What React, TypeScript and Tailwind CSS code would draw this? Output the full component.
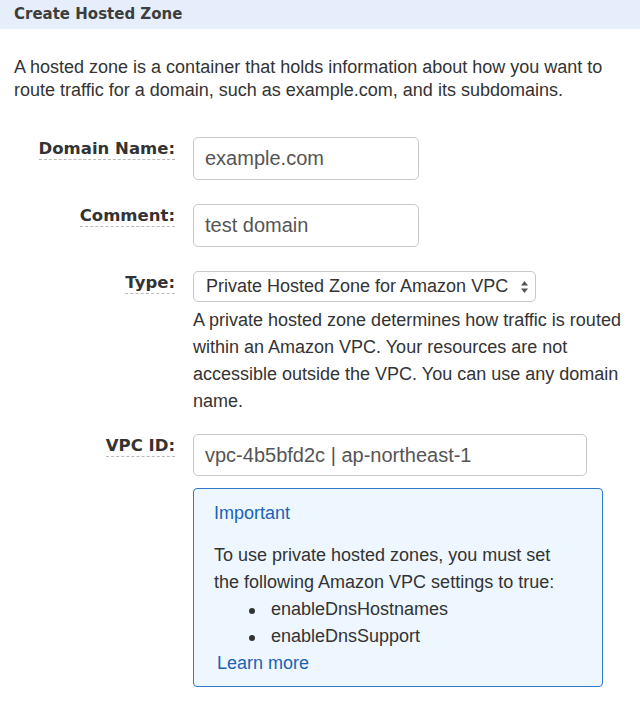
import { useState } from "react";

const labelText =
  "font-['DejaVu_Sans',Verdana,sans-serif] font-bold text-[16.5px] leading-none text-[#333] border-b border-dashed border-[#bbb] pb-px";

function FormRow({ label, children }: { label: string; children: React.ReactNode }) {
  return (
    <div className="flex items-start">
      <div className="w-[175px] shrink-0 flex justify-end pt-[4px]">
        <span className={labelText}>{label}</span>
      </div>
      <div className="ml-[18px]">{children}</div>
    </div>
  );
}

export default function App() {
  const [domain, setDomain] = useState("example.com");
  const [comment, setComment] = useState("test domain");
  const [vpc, setVpc] = useState("vpc-4b5bfd2c | ap-northeast-1");
  const [zoneType, setZoneType] = useState("private");

  return (
    <div className="min-h-screen bg-white font-['Liberation_Sans',Arial,sans-serif] text-[#333]">
      {/* Title bar */}
      <div className="h-[29px] bg-[#e5eefa] pl-[14px] flex items-center">
        <h1 className="font-['DejaVu_Sans',Verdana,sans-serif] font-bold text-[15px] text-[#3d3d3d]">
          Create Hosted Zone
        </h1>
      </div>

      <p className="mt-[27px] px-[14px] text-[18px] leading-[23px]">
        A hosted zone is a container that holds information about how you want to route traffic for a
        domain, such as example.com, and its subdomains.
      </p>

      <div className="mt-[35px] flex flex-col">
        <FormRow label="Domain Name:">
          <input
            value={domain}
            onChange={(e) => setDomain(e.target.value)}
            className="w-[226px] h-[43px] px-[11px] border border-[#c8c8c8] rounded-[5px] text-[20px] text-[#555] outline-none"
          />
        </FormRow>

        <div className="mt-[24px]">
          <FormRow label="Comment:">
            <input
              value={comment}
              onChange={(e) => setComment(e.target.value)}
              className="w-[226px] h-[43px] px-[11px] border border-[#c8c8c8] rounded-[5px] text-[20px] text-[#555] outline-none"
            />
          </FormRow>
        </div>

        <div className="mt-[24px]">
          <FormRow label="Type:">
            <div className="relative w-[343px]">
              <select
                value={zoneType}
                onChange={(e) => setZoneType(e.target.value)}
                className="appearance-none w-full h-[31px] pl-[12px] pr-[20px] border border-[#c8c8c8] rounded-[5px] bg-white text-[18px] text-[#333] outline-none"
              >
                <option value="public">Public Hosted Zone</option>
                <option value="private">Private Hosted Zone for Amazon VPC</option>
              </select>
              <svg
                className="absolute right-[8px] top-[10px] pointer-events-none"
                width="7"
                height="12"
                viewBox="0 0 7 12"
              >
                <path d="M3.5 0 L7 4.6 H0 Z" fill="#555" />
                <path d="M0 7.4 H7 L3.5 12 Z" fill="#555" />
              </svg>
            </div>
            <p className="mt-[5px] w-[440px] text-[18px] leading-[27px]">
              A private hosted zone determines how traffic is routed within an Amazon VPC. Your
              resources are not accessible outside the VPC. You can use any domain name.
            </p>
          </FormRow>
        </div>

        <div className="mt-[19px]">
          <FormRow label="VPC ID:">
            <input
              value={vpc}
              onChange={(e) => setVpc(e.target.value)}
              className="w-[394px] h-[42px] px-[11px] border border-[#c8c8c8] rounded-[5px] text-[20px] text-[#555] outline-none"
            />

            {/* Important notice */}
            <div className="mt-[12px] w-[410px] border border-[#2f79cc] rounded-[4px] bg-[#eef7ff] pt-[11px] pb-[9px] pl-[20px] pr-[32px] text-[18px] leading-[27px]">
              <div className="text-[#1a62b8]">Important</div>
              <p className="mt-[15px]">
                To use private hosted zones, you must set the following Amazon VPC settings to true:
              </p>
              <ul>
                <li className="flex items-center">
                  <span className="ml-[35px] mt-[2px] w-[6px] h-[6px] rounded-full bg-[#333]" />
                  <span className="ml-[16px]">enableDnsHostnames</span>
                </li>
                <li className="flex items-center">
                  <span className="ml-[35px] mt-[2px] w-[6px] h-[6px] rounded-full bg-[#333]" />
                  <span className="ml-[16px]">enableDnsSupport</span>
                </li>
              </ul>
              <a href="#" className="ml-[3px] text-[#1a62b8]">
                Learn more
              </a>
            </div>
          </FormRow>
        </div>
      </div>
    </div>
  );
}
